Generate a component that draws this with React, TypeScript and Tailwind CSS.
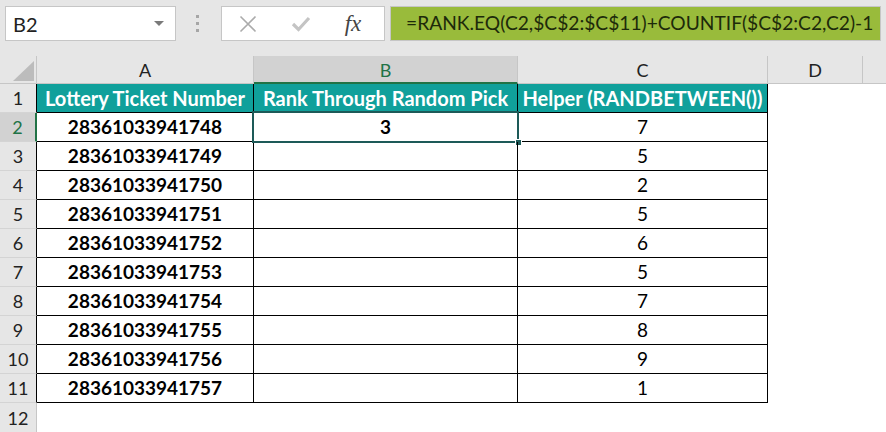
import React from "react";

const rows = [
  ["28361033941748", "3", "7"],
  ["28361033941749", "", "5"],
  ["28361033941750", "", "2"],
  ["28361033941751", "", "5"],
  ["28361033941752", "", "6"],
  ["28361033941753", "", "5"],
  ["28361033941754", "", "7"],
  ["28361033941755", "", "8"],
  ["28361033941756", "", "9"],
  ["28361033941757", "", "1"],
];

function Toolbar() {
  return (
    <div className="flex items-start h-[56px] pt-[6px]">
      <div className="ml-[5px] w-[171px] h-[35px] bg-white border border-[#c6c6c6] flex items-center justify-between pl-[7px] pr-[11px]">
        <span className="text-[20px] text-[#222]">B2</span>
        <svg width="10" height="6" viewBox="0 0 10 6"><path d="M0 0 L10 0 L5 5 Z" fill="#7a7a7a" /></svg>
      </div>
      <div className="w-[43px] h-[35px] flex flex-col items-center justify-center gap-[4px]">
        <div className="w-[3px] h-[3px] bg-[#a6a6a6]" />
        <div className="w-[3px] h-[3px] bg-[#a6a6a6]" />
        <div className="w-[3px] h-[3px] bg-[#a6a6a6]" />
      </div>
      <div className="ml-[2px] w-[164px] h-[35px] bg-white border border-[#c6c6c6] flex items-center">
        <div className="w-[52px] flex justify-center">
          <svg width="18" height="18" viewBox="0 0 18 18"><path d="M1.5 1.5 L16.5 16.5 M16.5 1.5 L1.5 16.5" stroke="#ababab" strokeWidth="1.6" fill="none" /></svg>
        </div>
        <div className="w-[54px] flex justify-center">
          <svg width="20" height="18" viewBox="0 0 20 18"><path d="M2 9 L7.5 14.5 L18 3" stroke="#c4c4c4" strokeWidth="3.2" fill="none" /></svg>
        </div>
        <div className="flex-1 flex justify-center pr-[6px]">
          <span className="italic text-[#444] text-[23px] leading-none" style={{ fontFamily: "'Liberation Serif', serif" }}>fx</span>
        </div>
      </div>
      <div className="ml-[5px] w-[491px] h-[35px] bg-[#99bb3b] border border-[#c6c6c6] flex items-center pl-[15px]">
        <span className="text-[19.2px] text-[#1d2a0a] whitespace-nowrap">=RANK.EQ(C2,$C$2:$C$11)+COUNTIF($C$2:C2,C2)-1</span>
      </div>
    </div>
  );
}

export default function App() {
  const hdr = "h-[28px] bg-[#e6e6e6] border-r border-[#c6c6c6] flex items-center justify-center text-[18px] text-[#222] pt-[2px]";
  const head = "h-[29px] bg-[#10a09b] border-r border-b border-black flex items-center justify-center text-[20px] font-bold text-white whitespace-nowrap";
  return (
    <div className="w-[886px] h-[432px] overflow-hidden bg-[#e6e6e6] relative" style={{ fontFamily: "Lato, 'Liberation Sans', sans-serif" }}>
      <Toolbar />
      <div className="grid grid-cols-[37px_217px_264px_250px_95px_23px] bg-white">
        {/* column headers */}
        <div className="h-[28px] bg-[#e6e6e6] border-r border-b border-[#c6c6c6] relative">
          <svg className="absolute left-[13px] top-[5px]" width="21" height="20" viewBox="0 0 21 20"><path d="M21 0 L21 20 L0 20 Z" fill="#bcbcbc" /></svg>
        </div>
        <div className={hdr + " border-b"}>A</div>
        <div className="h-[28px] bg-[#d2d2d2] border-r border-[#c6c6c6] border-b-2 border-b-[#217346] flex items-center justify-center text-[18px] text-[#217346] pt-[2px]">B</div>
        <div className={hdr + " border-b"}>C</div>
        <div className={hdr + " border-b"}>D</div>
        <div className="h-[28px] bg-[#e6e6e6] border-b border-[#c6c6c6]" />

        {/* row 1 */}
        <div className="h-[29px] bg-[#e6e6e6] border-r border-r-black border-b border-b-[#d4d4d4] flex items-center justify-center text-[18px] text-[#222]">1</div>
        <div className={head}>Lottery Ticket Number</div>
        <div className={head}>Rank Through Random Pick</div>
        <div className={head}>Helper (RANDBETWEEN())</div>
        <div className="h-[29px] bg-white" />
        <div className="h-[29px] bg-white" />

        {rows.map((r, i) => {
          const sel = i === 0;
          return (
            <React.Fragment key={i}>
              <div className={"h-[29px] border-b border-b-[#d4d4d4] flex items-center justify-center text-[18px] " + (sel ? "bg-[#d2d2d2] text-[#217346] border-r-2 border-r-[#217346]" : "bg-[#e6e6e6] text-[#222] border-r border-r-black")}>{i + 2}</div>
              <div className="h-[29px] border-r border-b border-black flex items-center justify-center text-[19px] font-bold text-black pt-[1px]">{r[0]}</div>
              <div className="h-[29px] border-r border-b border-black flex items-center justify-center text-[19px] font-bold text-black relative pt-[1px]">
                {sel && (
                  <>
                    <div className="absolute left-[-2px] top-[-2px] right-[-2px] bottom-[-2px] border-2 border-[#1d5a58]" />
                    <div className="absolute right-[-5px] bottom-[-5px] w-[7px] h-[7px] bg-[#1d5a58] border border-white" />
                  </>
                )}
                {r[1]}
              </div>
              <div className="h-[29px] border-r border-b border-black flex items-center justify-center text-[19px] text-black pt-[1px]">{r[2]}</div>
              <div className="h-[29px] bg-white" />
              <div className="h-[29px] bg-white" />
            </React.Fragment>
          );
        })}
        {/* row 12 */}
        <div className="h-[29px] bg-[#e6e6e6] border-r border-[#c6c6c6] flex items-center justify-center text-[18px] text-[#222] pt-[2px]">12</div>
        <div className="h-[29px] bg-white col-span-5" />
      </div>
    </div>
  );
}
